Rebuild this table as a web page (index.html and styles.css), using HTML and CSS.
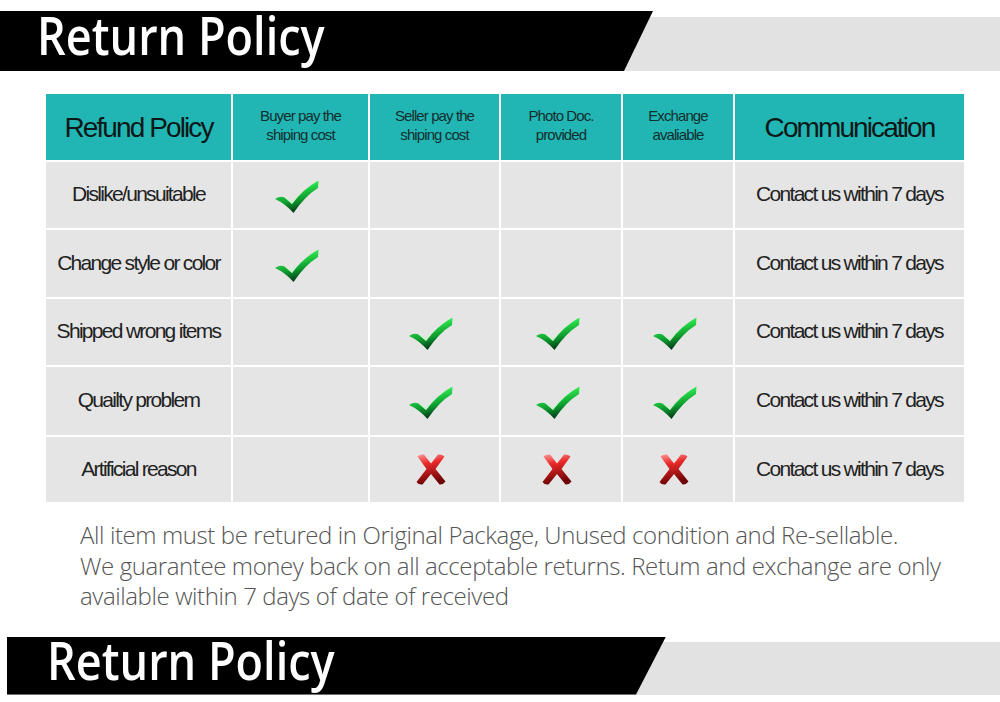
FILE: index.html
```html
<!DOCTYPE html>
<html>
<head>
<meta charset="utf-8">
<link rel="stylesheet" href="styles.css">
</head>
<body>
<svg width="0" height="0" class="defs">
  <defs>
    <linearGradient id="gck" x1="0" y1="0" x2="0.3" y2="1">
      <stop offset="0" stop-color="#8cff8c"/>
      <stop offset="0.3" stop-color="#2ee84e"/>
      <stop offset="0.7" stop-color="#0c9a2e"/>
      <stop offset="1" stop-color="#033d18"/>
    </linearGradient>
    <linearGradient id="gx" x1="0" y1="0" x2="0.2" y2="1">
      <stop offset="0" stop-color="#ff9a9a"/>
      <stop offset="0.35" stop-color="#ea2a2a"/>
      <stop offset="1" stop-color="#6e0404"/>
    </linearGradient>
    <symbol id="check" viewBox="0 0 44 34">
      <path d="M0 19 Q5 15.5 9.5 17.5 L17 24 Q28 9 43.5 0.5 L43 8 Q30 16 18.5 33 Q10 23.5 0 19 Z" fill="url(#gck)"/>
      <path d="M9.5 17.5 L17 24 Q28 9 43.5 0.5 Q30 8 17.5 21 Z" fill="#b4ffb4" opacity="0.55"/>
    </symbol>
    <symbol id="cross" viewBox="0 0 32 31">
      <path d="M2.5 2.5 Q5 0 9 0.5 L16 9.5 L23 0.5 Q27 0 29.5 2.5 L20.5 15 L30.5 27.5 Q28 31 24.5 30.5 L16 20 L7.5 30.5 Q3.5 31 1.5 28 L11.5 15 Z" fill="url(#gx)"/>
    </symbol>
  </defs>
</svg>

<header class="banner banner-top">
  <div class="banner-black"><span class="banner-text">Return Policy</span></div>
</header>

<main class="policy">
  <div class="grid">
    <div class="cell head big">Refund Policy</div>
    <div class="cell head small">Buyer pay the<br>shiping cost</div>
    <div class="cell head small">Seller pay the<br>shiping cost</div>
    <div class="cell head small">Photo Doc.<br>provided</div>
    <div class="cell head small">Exchange<br>avaliable</div>
    <div class="cell head big">Communication</div>

    <div class="cell label">Dislike/unsuitable</div>
    <div class="cell"><svg class="ck"><use href="#check"/></svg></div>
    <div class="cell"></div>
    <div class="cell"></div>
    <div class="cell"></div>
    <div class="cell label">Contact us within 7 days</div>

    <div class="cell label">Change style or color</div>
    <div class="cell"><svg class="ck"><use href="#check"/></svg></div>
    <div class="cell"></div>
    <div class="cell"></div>
    <div class="cell"></div>
    <div class="cell label">Contact us within 7 days</div>

    <div class="cell label">Shipped wrong items</div>
    <div class="cell"></div>
    <div class="cell"><svg class="ck"><use href="#check"/></svg></div>
    <div class="cell"><svg class="ck"><use href="#check"/></svg></div>
    <div class="cell"><svg class="ck"><use href="#check"/></svg></div>
    <div class="cell label">Contact us within 7 days</div>

    <div class="cell label">Quailty problem</div>
    <div class="cell"></div>
    <div class="cell"><svg class="ck"><use href="#check"/></svg></div>
    <div class="cell"><svg class="ck"><use href="#check"/></svg></div>
    <div class="cell"><svg class="ck"><use href="#check"/></svg></div>
    <div class="cell label">Contact us within 7 days</div>

    <div class="cell label">Artificial reason</div>
    <div class="cell"></div>
    <div class="cell"><svg class="cx"><use href="#cross"/></svg></div>
    <div class="cell"><svg class="cx"><use href="#cross"/></svg></div>
    <div class="cell"><svg class="cx"><use href="#cross"/></svg></div>
    <div class="cell label">Contact us within 7 days</div>
  </div>

  <p class="note">All item must be retured in Original Package, Unused condition and Re-sellable.<br>We guarantee money back on all acceptable returns. Retum and exchange are only<br>available within 7 days of date of received</p>
</main>

<footer class="banner banner-bottom">
  <div class="banner-black"><span class="banner-text">Return Policy</span></div>
</footer>
</body>
</html>
```

FILE: styles.css
```css
html, body {
  margin: 0;
  padding: 0;
  background: #ffffff;
}
body {
  width: 1000px;
  height: 702px;
  overflow: hidden;
  font-family: "Liberation Sans", Arial, sans-serif;
}
.defs {
  position: absolute;
  width: 0;
  height: 0;
}

/* Banners */
.banner {
  display: flex;
  background: linear-gradient(#ffffff, #ffffff) top left / 100% 6px no-repeat, #e2e2e2;
}
.banner-top {
  margin-top: 11px;
  height: 60px;
}
.banner-bottom {
  margin-top: 25px;
  margin-left: 7px;
  height: 58px;
  background: linear-gradient(#ffffff, #ffffff) top left / 100% 5px no-repeat, #e2e2e2;
}
.banner-black {
  background: #000000;
  width: 653px;
  clip-path: polygon(0 0, 100% 0, calc(100% - 29px) 100%, 0 100%);
  box-sizing: border-box;
  padding-left: 37px;
}
.banner-bottom .banner-black {
  width: 659px;
  padding-left: 40px;
  clip-path: polygon(0 0, 100% 0, calc(100% - 30px) 100%, 0 100%);
}
.banner-text {
  display: inline-block;
  font-family: "Open Sans", sans-serif;
  font-weight: 600;
  font-size: 53px;
  line-height: 48px;
  color: #ffffff;
  transform: scaleX(0.85);
  transform-origin: left center;
  white-space: nowrap;
}
.banner-bottom .banner-text {
  line-height: 46px;
}

/* Table */
.policy {
  margin-top: 23px;
}
.grid {
  margin-left: 46px;
  width: 918px;
  display: grid;
  grid-template-columns: 185px 135px 129px 120px 110px 229px;
  grid-template-rows: 66px 66px 67px 66px 68px 65px;
  gap: 2px;
}
.cell {
  background: #e5e5e5;
  display: flex;
  align-items: center;
  justify-content: center;
  text-align: center;
}
.head {
  background: #21b6b4;
  color: #0c1818;
}
.big {
  font-size: 28px;
  letter-spacing: -1.9px;
  padding-top: 2px;
}
.small {
  font-size: 15px;
  letter-spacing: -0.9px;
  line-height: 19px;
  color: #132e2e;
  padding-bottom: 4px;
}
.label {
  font-size: 21px;
  letter-spacing: -1.7px;
  color: #222222;
  padding-bottom: 2px;
}
.ck {
  width: 44px;
  height: 34px;
  margin-left: -7px;
  margin-top: 4px;
}
.cx {
  width: 32px;
  height: 31px;
  margin-left: -8px;
}

.note {
  margin: 18px 0 0 80px;
  font-family: "Open Sans", sans-serif;
  font-weight: 300;
  font-size: 24px;
  line-height: 30.5px;
  letter-spacing: -0.4px;
  color: #555555;
  white-space: nowrap;
}
```
